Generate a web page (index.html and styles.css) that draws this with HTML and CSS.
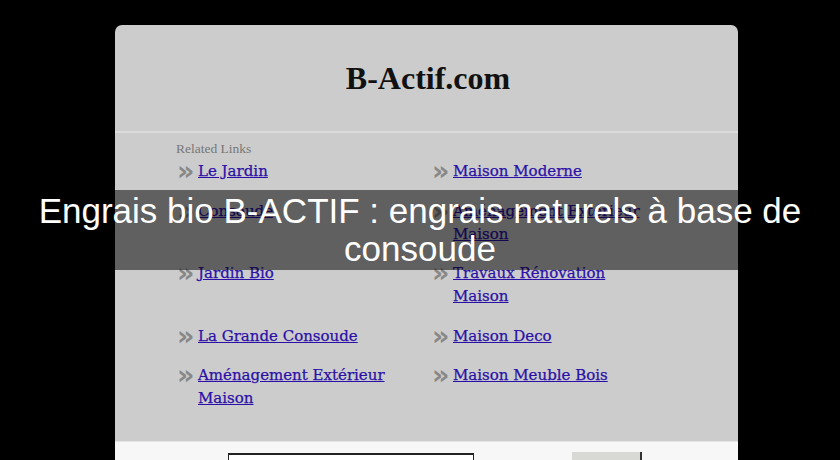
FILE: index.html
```html
<!DOCTYPE html>
<html>
<head>
<meta charset="utf-8">
<title>B-Actif.com</title>
<link rel="stylesheet" href="styles.css">
</head>
<body>
<div class="box">
  <div class="header"><h1 class="title">B-Actif.com</h1></div>
  <div class="links">
    <div class="related">Related Links</div>
    <div class="grid">
      <div class="item"><span class="chev">»</span><a href="#">Le Jardin</a></div>
      <div class="item"><span class="chev">»</span><a href="#">Maison Moderne</a></div>
      <div class="item"><span class="chev">»</span><a href="#">Consoude</a></div>
      <div class="item"><span class="chev">»</span><a href="#">Aménagement Extérieur Maison</a></div>
      <div class="item"><span class="chev">»</span><a href="#">Jardin Bio</a></div>
      <div class="item"><span class="chev">»</span><a href="#">Travaux Rénovation Maison</a></div>
      <div class="item"><span class="chev">»</span><a href="#">La Grande Consoude</a></div>
      <div class="item"><span class="chev">»</span><a href="#">Maison Deco</a></div>
      <div class="item"><span class="chev">»</span><a href="#">Aménagement Extérieur Maison</a></div>
      <div class="item"><span class="chev">»</span><a href="#">Maison Meuble Bois</a></div>
    </div>
  </div>
  <div class="search">
    <span class="label">Search:</span>
    <input class="field" type="text">
    <button class="btn">Search</button>
  </div>
</div>
<div class="overlay">Engrais bio B-ACTIF : engrais naturels à base de consoude</div>
</body>
</html>
```

FILE: styles.css
```css
html, body {
  margin: 0;
  padding: 0;
  background: #000;
  height: 460px;
  overflow: hidden;
}
.box {
  margin: 25px 0 0 115px;
  width: 623px;
  background: #cccccc;
  border-radius: 7px 7px 0 0;
  overflow: hidden;
}
.header {
  height: 106px;
  display: flex;
  align-items: center;
  justify-content: center;
  border-bottom: 2px solid #dcdcdc;
}
.title {
  margin: 0;
  font-family: "Liberation Serif", serif;
  font-weight: bold;
  font-size: 32px;
  color: #111;
  padding-left: 3px;
}
.links {
  padding: 8px 0 31px 61px;
}
.related {
  font-family: "Liberation Serif", serif;
  font-size: 13.5px;
  line-height: 16px;
  color: #777;
  margin-bottom: 3px;
}
.grid {
  display: grid;
  grid-template-columns: 220px 220px;
  column-gap: 35px;
  row-gap: 16.5px;
}
.item {
  display: flex;
  align-items: flex-start;
  font-family: "DejaVu Serif", serif;
  font-size: 15px;
  line-height: 23px;
}
.chev {
  flex: none;
  width: 22px;
  height: 23px;
  overflow: visible;
  color: #888;
  font-family: "DejaVu Sans", sans-serif;
  font-weight: bold;
  font-size: 27px;
  line-height: 23px;
  padding-left: 1px;
  box-sizing: border-box;
  position: relative;
  top: -1px;
}
.item a {
  color: #2b10a8;
  text-decoration: underline;
  -webkit-text-stroke: 0.25px #2b10a8;
}
.search {
  background: #f7f7f7;
  border-top: 1px solid #e4e4e4;
  height: 40px;
  display: flex;
  align-items: flex-start;
  padding-top: 10px;
}
.label {
  font-family: "Liberation Serif", serif;
  font-size: 13px;
  color: #999;
  margin: 6px 0 0 80px;
  width: 33px;
}
.field {
  margin: 1px 0 0 0;
  width: 246px;
  height: 20px;
  box-sizing: border-box;
  border: 1px solid #222;
  border-top-width: 2px;
  background: #fff;
  padding: 0;
}
.btn {
  margin-left: 98px;
  width: 70px;
  height: 24px;
  background: #d8d8d4;
  border: none;
  border-right: 2px solid #333;
  font-family: "Liberation Sans", sans-serif;
  font-size: 13px;
  color: #222;
}
.overlay {
  position: absolute;
  left: 0;
  top: 190px;
  width: 840px;
  height: 80px;
  box-sizing: border-box;
  padding-top: 2px;
  background: rgba(0, 0, 0, 0.53);
  color: #fff;
  font-family: "Liberation Sans", Arial, sans-serif;
  font-size: 35px;
  line-height: 38px;
  text-align: center;
}
```
